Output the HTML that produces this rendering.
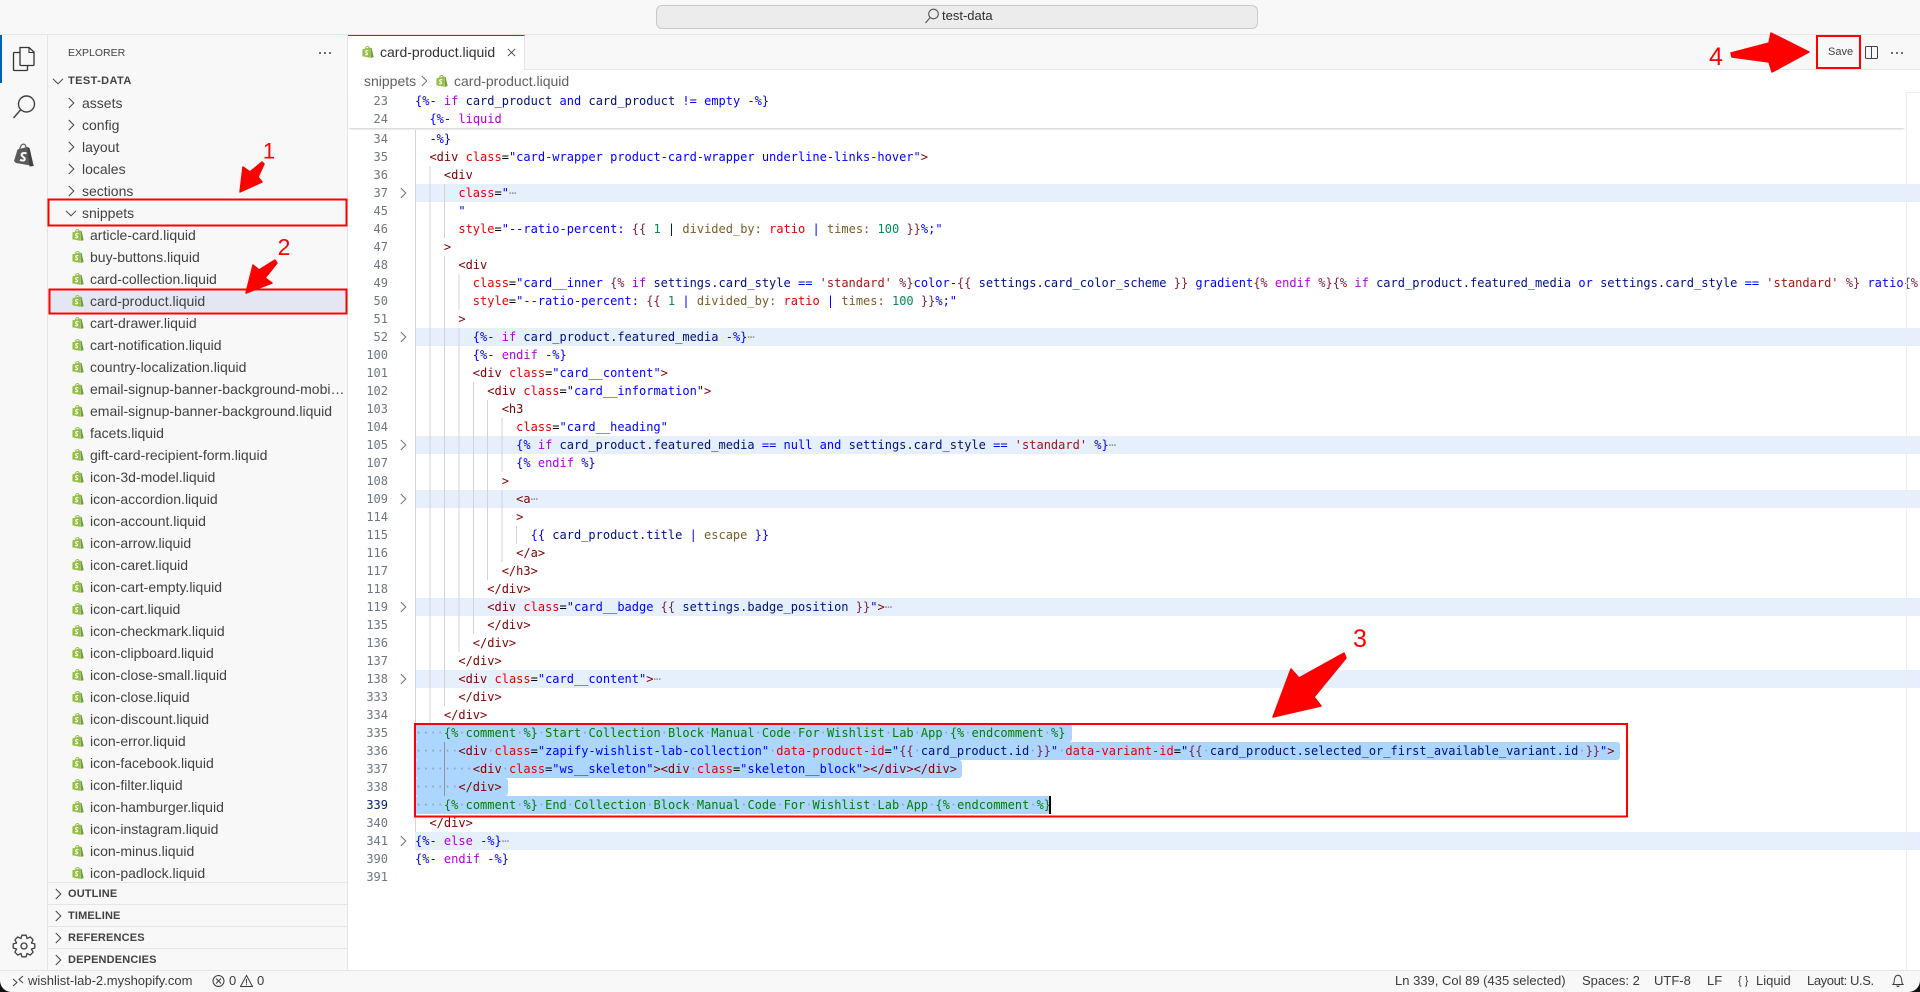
<!DOCTYPE html>
<html lang="en"><head><meta charset="utf-8"><title>card-product.liquid - test-data</title>
<style>
html,body{margin:0;padding:0;width:1920px;height:992px;overflow:hidden;background:#fff}
body{position:relative;font-family:"Liberation Sans",sans-serif;color:#424242;font-size:14px}
.abs,.abs2{position:absolute}
#title{left:0;top:0;width:1920px;height:34px;background:#f8f8f8;border-bottom:1px solid #e5e5e5}
#search{left:656px;top:5px;width:600px;height:22px;background:#ececec;border:1px solid #c9c9c9;border-radius:6px}
#stxt{left:942px;top:7px;font-size:13px;line-height:18px;color:#2e2e2e}
#act{left:0;top:35px;width:47px;height:935px;background:#f8f8f8;border-right:1px solid #e5e5e5}
#actline{left:0;top:35px;width:2px;height:48px;background:#005fb8}
#side{left:48px;top:35px;width:299px;height:935px;background:#f8f8f8;border-right:1px solid #e5e5e5;overflow:hidden}
#tabs{left:348px;top:35px;width:1572px;height:34px;background:#f8f8f8;border-bottom:1px solid #e5e5e5}
#tab{left:348px;top:35px;width:177px;height:35px;background:#fff;border-right:1px solid #e5e5e5;border-top:1px solid #005fb8;box-sizing:border-box}
#tabt{left:380px;top:42px;line-height:20px;color:#333}
.hd{position:absolute;left:68px;font-size:10.5px;line-height:14px;color:#424242}
.b{position:absolute;left:68px;font-size:11px;font-weight:bold;line-height:22px;color:#424242;letter-spacing:.15px}
.sep{position:absolute;left:48px;width:299px;height:1px;background:#e5e5e5}
.r{position:absolute;left:48px;width:299px;height:22px;line-height:22px;overflow:hidden;white-space:nowrap}
.r span{position:absolute;left:42px;width:256px;overflow:hidden;text-overflow:ellipsis;top:0;color:#424242}
.r.dr span{left:34px}
.r svg{position:absolute}
.r.fi svg{left:24px;top:5px}
.r.dr svg{left:15px;top:3px}
#sel{background:#e4e6f1}
#crumb{left:348px;top:70px;width:1572px;height:22px;background:#fff}
.cr{position:absolute;top:71px;line-height:21px;color:#616161}
#code{left:415px;top:130px;width:1505px;font:12px/18px "DejaVu Sans Mono",monospace;color:#000;z-index:0}
#sticky{left:348px;top:92px;width:1557px;height:36px;background:#fff;box-shadow:0 2px 2px -1px #ccc;z-index:2;font:12px/18px "DejaVu Sans Mono",monospace}
#sticky .l{left:67px}
.l{position:relative;height:18px;white-space:pre;width:1505px}
.l>b{position:absolute;left:-65px;width:38px;text-align:right;font-weight:normal;color:#6e7681;top:0}
.l>svg{position:absolute;left:-20px;top:1px;opacity:.75}
.h{background-color:#e5f0fc}
.g1{background-image:linear-gradient(#d3d3d3,#d3d3d3);background-size:1px 100%;background-repeat:no-repeat}
.gg{background-image:repeating-linear-gradient(90deg,#d3d3d3 0,#d3d3d3 1px,transparent 1px,transparent 14.44px);background-repeat:no-repeat;background-position:0 0;background-size:var(--w) 100%}
.t{color:#800000}.a{color:#e50000}.s{color:#0000ff}.k{color:#0000ff}.c{color:#af00db}.v{color:#001080}.n{color:#098658}.f{color:#795e26}.m{color:#811f3f}.q{color:#a31515}.o{color:#008000}
.e{color:#999;font-style:normal}
u{text-decoration:none;color:#8aa4bf}
.sl{position:absolute;left:0;top:0;height:18px;background:#add6ff;border-radius:3px;z-index:-1}
.ag{position:absolute;left:28.88px;top:0;width:1px;height:18px;background:#939393}
#mm{left:1906px;top:92px;width:13px;height:878px;border-left:1px solid #eee;border-top:1px solid #eee;z-index:3}
#status{left:0;top:970px;width:1920px;height:21px;background:#f8f8f8;border-top:1px solid #e5e5e5;z-index:4}
.st{position:absolute;top:971px;line-height:20px;font-size:13px;color:#3b3b3b;z-index:5;white-space:nowrap}
#ann{position:absolute;left:0;top:0;z-index:10}
.dots{position:absolute;width:2.4px;height:2.4px;border-radius:50%;background:#424242;box-shadow:5px 0 #424242,10px 0 #424242}
</style></head>
<body>
<svg width="0" height="0" style="position:absolute">
<symbol id="bag" viewBox="0.8 0.6 14.400 14.900"><path d="M1.200 4.600 10.400 2.400 11.200 15.400 1 13.400Z" fill="#95bf47"/><path d="M10.800 2.500 12.600 3.200 15 14.400 11.600 15.400Z" fill="#6f9e3c"/><path d="M4.800 4.200C5 2.200 6.400.9 7.600 1.100 8.700 1.300 9.200 2.200 9.300 3.200" fill="none" stroke="#95bf47" stroke-width="1.100"/><path d="M8.500 6.600C7 5.900 5 6.300 5.100 7.700 5.200 9 7.600 9.100 7.500 10.600 7.400 11.800 5.600 11.700 4.400 11" fill="none" stroke="#fff" stroke-width="1.400"/></symbol>
<symbol id="cr" viewBox="0 0 16 16"><path d="M5.800 3 10.800 8 5.800 13" fill="none" stroke="#424242" stroke-width="1"/></symbol>
<symbol id="cd" viewBox="0 0 16 16"><path d="M3 5.800 8 10.800 13 5.800" fill="none" stroke="#424242" stroke-width="1"/></symbol>
</svg>

<div class="abs" id="title"></div>
<div class="abs" id="search"></div>
<svg class="abs" style="left:923px;top:7px" width="17" height="18" viewBox="0 0 17 18"><circle cx="10.500" cy="7" r="4.800" fill="none" stroke="#555" stroke-width="1.100"/><path d="M7 10.600 2.500 16" stroke="#555" stroke-width="1.100"/></svg>
<div class="abs" id="stxt">test-data</div>

<div class="abs" id="act"></div><div class="abs" id="actline"></div>
<svg class="abs" style="left:0;top:35px" width="47" height="140" viewBox="0 0 47 140">
<path d="M19.500 17.500H14.500a1 1 0 0 0-1 1V34.500a1 1 0 0 0 1 1H26.500a1 1 0 0 0 1-1V30.500" fill="none" stroke="#333" stroke-width="1.300"/>
<path d="M20 12.500V29.500a1 1 0 0 0 1 1H33a1 1 0 0 0 1-1V17L29 12.500Z" fill="#f8f8f8" stroke="#333" stroke-width="1.300"/>
<path d="M29 12.500V17.500H34" fill="none" stroke="#333" stroke-width="1.100"/>
<circle cx="26.500" cy="69" r="8" fill="none" stroke="#424242" stroke-width="1.400"/><path d="M20.500 75 13.500 83" stroke="#424242" stroke-width="1.500" fill="none"/>
<path d="M14 126 17.500 114.500 27 112 29 112.500 33.500 131 16 128Z" fill="#5a5a5a"/><path d="M27.500 112.500 29.500 113 33.700 131 29.500 131.500Z" fill="#424242"/><path d="M19.500 115C20 111 22 108.800 24 109.200 25.400 109.600 26 111 26 113" fill="none" stroke="#5a5a5a" stroke-width="1.200"/>
<path d="M26.500 118.500C24.500 117.500 21.500 118 21.600 120 21.800 122 25 122 24.800 124.200 24.600 126 22 125.800 20 124.800" fill="none" stroke="#f8f8f8" stroke-width="2"/>
</svg>
<svg class="abs" style="left:12px;top:934px" width="24" height="24" viewBox="0 0 24 24"><g transform="translate(12 12)"><path d="M-2.100-10.800 2.100-10.800 3.060-7.390 6.150-9.120 9.120-6.150 7.390-3.060 10.800-2.100 10.800 2.100 7.390 3.060 9.120 6.150 6.150 9.120 3.060 7.390 2.100 10.800-2.100 10.800-3.060 7.390-6.150 9.120-9.120 6.150-7.390 3.060-10.800 2.100-10.800-2.100-7.390-3.060-9.120-6.150-6.150-9.120-3.060-7.390Z" fill="none" stroke="#424242" stroke-width="1.300" stroke-linejoin="round"/><circle r="3" fill="none" stroke="#424242" stroke-width="1.300"/></g></svg>

<div class="abs" id="side"></div>
<div class="hd" style="top:46px">EXPLORER</div>
<div class="dots" style="left:319px;top:52px"></div>
<svg class="abs" style="left:50px;top:73px" width="16" height="16"><use href="#cd"/></svg>
<div class="b" style="top:70px;letter-spacing:.4px">TEST-DATA</div>

<div class="r dr" style="top:92px"><svg width="16" height="16"><use href="#cr"/></svg><span>assets</span></div>
<div class="r dr" style="top:114px"><svg width="16" height="16"><use href="#cr"/></svg><span>config</span></div>
<div class="r dr" style="top:136px"><svg width="16" height="16"><use href="#cr"/></svg><span>layout</span></div>
<div class="r dr" style="top:158px"><svg width="16" height="16"><use href="#cr"/></svg><span>locales</span></div>
<div class="r dr" style="top:180px"><svg width="16" height="16"><use href="#cr"/></svg><span>sections</span></div>
<div class="r dr" style="top:202px"><svg width="16" height="16"><use href="#cd"/></svg><span>snippets</span></div>
<div class="r fi" style="top:224px"><svg width="12" height="12"><use href="#bag"/></svg><span>article-card.liquid</span></div>
<div class="r fi" style="top:246px"><svg width="12" height="12"><use href="#bag"/></svg><span>buy-buttons.liquid</span></div>
<div class="r fi" style="top:268px"><svg width="12" height="12"><use href="#bag"/></svg><span>card-collection.liquid</span></div>
<div class="r fi" id="sel" style="top:290px"><svg width="12" height="12"><use href="#bag"/></svg><span>card-product.liquid</span></div>
<div class="r fi" style="top:312px"><svg width="12" height="12"><use href="#bag"/></svg><span>cart-drawer.liquid</span></div>
<div class="r fi" style="top:334px"><svg width="12" height="12"><use href="#bag"/></svg><span>cart-notification.liquid</span></div>
<div class="r fi" style="top:356px"><svg width="12" height="12"><use href="#bag"/></svg><span>country-localization.liquid</span></div>
<div class="r fi" style="top:378px"><svg width="12" height="12"><use href="#bag"/></svg><span>email-signup-banner-background-mobile.liquid</span></div>
<div class="r fi" style="top:400px"><svg width="12" height="12"><use href="#bag"/></svg><span>email-signup-banner-background.liquid</span></div>
<div class="r fi" style="top:422px"><svg width="12" height="12"><use href="#bag"/></svg><span>facets.liquid</span></div>
<div class="r fi" style="top:444px"><svg width="12" height="12"><use href="#bag"/></svg><span>gift-card-recipient-form.liquid</span></div>
<div class="r fi" style="top:466px"><svg width="12" height="12"><use href="#bag"/></svg><span>icon-3d-model.liquid</span></div>
<div class="r fi" style="top:488px"><svg width="12" height="12"><use href="#bag"/></svg><span>icon-accordion.liquid</span></div>
<div class="r fi" style="top:510px"><svg width="12" height="12"><use href="#bag"/></svg><span>icon-account.liquid</span></div>
<div class="r fi" style="top:532px"><svg width="12" height="12"><use href="#bag"/></svg><span>icon-arrow.liquid</span></div>
<div class="r fi" style="top:554px"><svg width="12" height="12"><use href="#bag"/></svg><span>icon-caret.liquid</span></div>
<div class="r fi" style="top:576px"><svg width="12" height="12"><use href="#bag"/></svg><span>icon-cart-empty.liquid</span></div>
<div class="r fi" style="top:598px"><svg width="12" height="12"><use href="#bag"/></svg><span>icon-cart.liquid</span></div>
<div class="r fi" style="top:620px"><svg width="12" height="12"><use href="#bag"/></svg><span>icon-checkmark.liquid</span></div>
<div class="r fi" style="top:642px"><svg width="12" height="12"><use href="#bag"/></svg><span>icon-clipboard.liquid</span></div>
<div class="r fi" style="top:664px"><svg width="12" height="12"><use href="#bag"/></svg><span>icon-close-small.liquid</span></div>
<div class="r fi" style="top:686px"><svg width="12" height="12"><use href="#bag"/></svg><span>icon-close.liquid</span></div>
<div class="r fi" style="top:708px"><svg width="12" height="12"><use href="#bag"/></svg><span>icon-discount.liquid</span></div>
<div class="r fi" style="top:730px"><svg width="12" height="12"><use href="#bag"/></svg><span>icon-error.liquid</span></div>
<div class="r fi" style="top:752px"><svg width="12" height="12"><use href="#bag"/></svg><span>icon-facebook.liquid</span></div>
<div class="r fi" style="top:774px"><svg width="12" height="12"><use href="#bag"/></svg><span>icon-filter.liquid</span></div>
<div class="r fi" style="top:796px"><svg width="12" height="12"><use href="#bag"/></svg><span>icon-hamburger.liquid</span></div>
<div class="r fi" style="top:818px"><svg width="12" height="12"><use href="#bag"/></svg><span>icon-instagram.liquid</span></div>
<div class="r fi" style="top:840px"><svg width="12" height="12"><use href="#bag"/></svg><span>icon-minus.liquid</span></div>
<div class="r fi" style="top:862px"><svg width="12" height="12"><use href="#bag"/></svg><span>icon-padlock.liquid</span></div>

<div class="sep" style="top:882px"></div><div class="sep" style="top:904px"></div><div class="sep" style="top:926px"></div><div class="sep" style="top:948px"></div>
<svg class="abs" style="left:50px;top:886px" width="16" height="16"><use href="#cr"/></svg><div class="b" style="top:883px">OUTLINE</div>
<svg class="abs" style="left:50px;top:908px" width="16" height="16"><use href="#cr"/></svg><div class="b" style="top:905px">TIMELINE</div>
<svg class="abs" style="left:50px;top:930px" width="16" height="16"><use href="#cr"/></svg><div class="b" style="top:927px">REFERENCES</div>
<svg class="abs" style="left:50px;top:952px" width="16" height="16"><use href="#cr"/></svg><div class="b" style="top:949px">DEPENDENCIES</div>

<div class="abs" id="tabs"></div>
<div class="abs" id="tab"></div>
<svg class="abs" style="left:362px;top:46px" width="12" height="12"><use href="#bag"/></svg>
<div class="abs" id="tabt">card-product.liquid</div>
<svg class="abs" style="left:507px;top:48px" width="9" height="9" viewBox="0 0 10 10"><path d="M1 1 9 9M9 1 1 9" stroke="#424242" stroke-width="1"/></svg>
<div class="abs" style="left:1828px;top:45px;font-size:11px;line-height:14px;color:#424242">Save</div>
<svg class="abs" style="left:1865px;top:46px" width="13" height="14" viewBox="0 0 13 14"><rect x=".5" y=".5" width="12" height="12" rx="1" fill="none" stroke="#424242"/><path d="M6.500 .5V12.500" stroke="#424242"/></svg>
<div class="dots" style="left:1891px;top:52px"></div>

<div class="abs" id="crumb"></div>
<div class="cr" style="left:364px">snippets</div>
<svg class="abs" style="left:416px;top:73px;opacity:.75" width="16" height="16"><use href="#cr"/></svg>
<svg class="abs" style="left:436px;top:75px" width="12" height="12"><use href="#bag"/></svg>
<div class="cr" style="left:454px">card-product.liquid</div>

<div class="abs" id="sticky">
<div class="abs2" style="left:0;top:0;width:1px"></div>
<div class="l"><b>23</b><span class="k">{%-</span> <span class="c">if</span> <span class="v">card_product</span> <span class="k">and</span> <span class="v">card_product</span> <span class="k">!=</span> <span class="k">empty</span> <span class="k">-%}</span></div>
<div class="l"><b>24</b>  <span class="k">{%-</span> <span class="c">liquid</span></div>
</div>

<div class="abs" id="code">
<div class="l g1"><b>34</b>  <span class="k">-%}</span></div>
<div class="l g1"><b>35</b>  <span class="t">&lt;div</span> <span class="a">class</span>=<span class="s">"card-wrapper product-card-wrapper underline-links-hover"</span><span class="t">&gt;</span></div>
<div class="l gg" style="--w:28.88px"><b>36</b>    <span class="t">&lt;div</span></div>
<div class="l gg h" style="--w:43.32px"><b>37</b><svg width="16" height="16"><use href="#cr"/></svg>      <span class="a">class</span>=<span class="s">"</span><i class="e">⋯</i></div>
<div class="l gg" style="--w:43.32px"><b>45</b>      <span class="s">"</span></div>
<div class="l gg" style="--w:43.32px"><b>46</b>      <span class="a">style</span>=<span class="s">"--ratio-percent: </span><span class="m">{{</span> <span class="n">1</span> <span class="k">|</span> <span class="f">divided_by:</span> <span class="a">ratio</span> <span class="k">|</span> <span class="f">times:</span> <span class="n">100</span> <span class="m">}}</span><span class="s">%;"</span></div>
<div class="l gg" style="--w:28.88px"><b>47</b>    <span class="t">&gt;</span></div>
<div class="l gg" style="--w:43.32px"><b>48</b>      <span class="t">&lt;div</span></div>
<div class="l gg" style="--w:57.76px"><b>49</b>        <span class="a">class</span>=<span class="s">"card__inner </span><span class="m">{%</span> <span class="c">if</span> <span class="v">settings.card_style</span> <span class="k">==</span> <span class="q">'standard'</span> <span class="m">%}</span><span class="s">color-</span><span class="m">{{</span> <span class="v">settings.card_color_scheme</span> <span class="m">}}</span><span class="s"> gradient</span><span class="m">{%</span> <span class="c">endif</span> <span class="m">%}{%</span> <span class="c">if</span> <span class="v">card_product.featured_media</span> <span class="k">or</span> <span class="v">settings.card_style</span> <span class="k">==</span> <span class="q">'standard'</span> <span class="m">%}</span><span class="s"> ratio</span><span class="m">{%</span></div>
<div class="l gg" style="--w:57.76px"><b>50</b>        <span class="a">style</span>=<span class="s">"--ratio-percent: </span><span class="m">{{</span> <span class="n">1</span> <span class="k">|</span> <span class="f">divided_by:</span> <span class="a">ratio</span> <span class="k">|</span> <span class="f">times:</span> <span class="n">100</span> <span class="m">}}</span><span class="s">%;"</span></div>
<div class="l gg" style="--w:43.32px"><b>51</b>      <span class="t">&gt;</span></div>
<div class="l gg h" style="--w:57.76px"><b>52</b><svg width="16" height="16"><use href="#cr"/></svg>        <span class="k">{%-</span> <span class="c">if</span> <span class="v">card_product.featured_media</span> <span class="k">-%}</span><i class="e">⋯</i></div>
<div class="l gg" style="--w:57.76px"><b>100</b>        <span class="k">{%-</span> <span class="c">endif</span> <span class="k">-%}</span></div>
<div class="l gg" style="--w:57.76px"><b>101</b>        <span class="t">&lt;div</span> <span class="a">class</span>=<span class="s">"card__content"</span><span class="t">&gt;</span></div>
<div class="l gg" style="--w:72.2px"><b>102</b>          <span class="t">&lt;div</span> <span class="a">class</span>=<span class="s">"card__information"</span><span class="t">&gt;</span></div>
<div class="l gg" style="--w:86.64px"><b>103</b>            <span class="t">&lt;h3</span></div>
<div class="l gg" style="--w:101.08px"><b>104</b>              <span class="a">class</span>=<span class="s">"card__heading"</span></div>
<div class="l gg h" style="--w:101.08px"><b>105</b><svg width="16" height="16"><use href="#cr"/></svg>              <span class="k">{%</span> <span class="c">if</span> <span class="v">card_product.featured_media</span> <span class="k">==</span> <span class="k">null</span> <span class="k">and</span> <span class="v">settings.card_style</span> <span class="k">==</span> <span class="q">'standard'</span> <span class="k">%}</span><i class="e">⋯</i></div>
<div class="l gg" style="--w:101.08px"><b>107</b>              <span class="k">{%</span> <span class="c">endif</span> <span class="k">%}</span></div>
<div class="l gg" style="--w:86.64px"><b>108</b>            <span class="t">&gt;</span></div>
<div class="l gg h" style="--w:101.08px"><b>109</b><svg width="16" height="16"><use href="#cr"/></svg>              <span class="t">&lt;a</span><i class="e">⋯</i></div>
<div class="l gg" style="--w:101.08px"><b>114</b>              <span class="t">&gt;</span></div>
<div class="l gg" style="--w:115.52px"><b>115</b>                <span class="k">{{</span> <span class="v">card_product.title</span> <span class="k">|</span> <span class="f">escape</span> <span class="k">}}</span></div>
<div class="l gg" style="--w:101.08px"><b>116</b>              <span class="t">&lt;/a&gt;</span></div>
<div class="l gg" style="--w:86.64px"><b>117</b>            <span class="t">&lt;/h3&gt;</span></div>
<div class="l gg" style="--w:72.2px"><b>118</b>          <span class="t">&lt;/div&gt;</span></div>
<div class="l gg h" style="--w:72.2px"><b>119</b><svg width="16" height="16"><use href="#cr"/></svg>          <span class="t">&lt;div</span> <span class="a">class</span>=<span class="s">"card__badge </span><span class="m">{{</span> <span class="v">settings.badge_position</span> <span class="m">}}</span><span class="s">"</span><span class="t">&gt;</span><i class="e">⋯</i></div>
<div class="l gg" style="--w:72.2px"><b>135</b>          <span class="t">&lt;/div&gt;</span></div>
<div class="l gg" style="--w:57.76px"><b>136</b>        <span class="t">&lt;/div&gt;</span></div>
<div class="l gg" style="--w:43.32px"><b>137</b>      <span class="t">&lt;/div&gt;</span></div>
<div class="l gg h" style="--w:43.32px"><b>138</b><svg width="16" height="16"><use href="#cr"/></svg>      <span class="t">&lt;div</span> <span class="a">class</span>=<span class="s">"card__content"</span><span class="t">&gt;</span><i class="e">⋯</i></div>
<div class="l gg" style="--w:43.32px"><b>333</b>      <span class="t">&lt;/div&gt;</span></div>
<div class="l gg" style="--w:28.88px"><b>334</b>    <span class="t">&lt;/div&gt;</span></div>
<div class="l"><em class="sl" style="width:657px"></em><b>335</b><u>····</u><span class="o">{%<u>·</u>comment<u>·</u>%}<u>·</u>Start<u>·</u>Collection<u>·</u>Block<u>·</u>Manual<u>·</u>Code<u>·</u>For<u>·</u>Wishlist<u>·</u>Lab<u>·</u>App<u>·</u>{%<u>·</u>endcomment<u>·</u>%}</span></div>
<div class="l"><em class="sl" style="width:1205px"></em><em class="ag"></em><b>336</b><u>······</u><span class="t">&lt;div</span><u>·</u><span class="a">class</span>=<span class="s">"zapify-wishlist-lab-collection"</span><u>·</u><span class="a">data-product-id</span>=<span class="s">"</span><span class="m">{{</span><u>·</u><span class="v">card_product.id</span><u>·</u><span class="m">}}</span><span class="s">"</span><u>·</u><span class="a">data-variant-id</span>=<span class="s">"</span><span class="m">{{</span><u>·</u><span class="v">card_product.selected_or_first_available_variant.id</span><u>·</u><span class="m">}}</span><span class="s">"</span><span class="t">&gt;</span></div>
<div class="l"><em class="sl" style="width:547px"></em><em class="ag"></em><b>337</b><u>········</u><span class="t">&lt;div</span><u>·</u><span class="a">class</span>=<span class="s">"ws__skeleton"</span><span class="t">&gt;&lt;div</span><u>·</u><span class="a">class</span>=<span class="s">"skeleton__block"</span><span class="t">&gt;&lt;/div&gt;&lt;/div&gt;</span></div>
<div class="l"><em class="sl" style="width:93px"></em><em class="ag"></em><b>338</b><u>······</u><span class="t">&lt;/div&gt;</span></div>
<div class="l"><em class="sl" style="width:635px"></em><b style="color:#0b216f">339</b><u>····</u><span class="o">{%<u>·</u>comment<u>·</u>%}<u>·</u>End<u>·</u>Collection<u>·</u>Block<u>·</u>Manual<u>·</u>Code<u>·</u>For<u>·</u>Wishlist<u>·</u>Lab<u>·</u>App<u>·</u>{%<u>·</u>endcomment<u>·</u>%}</span><em style="position:absolute;left:634px;top:0;width:2px;height:18px;background:#000"></em></div>
<div class="l g1"><b>340</b>  <span class="t">&lt;/div&gt;</span></div>
<div class="l h"><b>341</b><svg width="16" height="16"><use href="#cr"/></svg><span class="k">{%-</span> <span class="c">else</span> <span class="k">-%}</span><i class="e">⋯</i></div>
<div class="l"><b>390</b><span class="k">{%-</span> <span class="c">endif</span> <span class="k">-%}</span></div>
<div class="l"><b>391</b></div>
</div>

<div class="abs" id="mm"></div>

<div class="abs" id="status"></div>
<svg class="abs" style="left:12px;top:973px;z-index:5" width="12" height="16" viewBox="0 0 12 16"><path d="M1 6 5 9.500 1 13M11 3 7 6.500 11 10" fill="none" stroke="#3b3b3b" stroke-width="1"/></svg>
<div class="st" style="left:28px">wishlist-lab-2.myshopify.com</div>
<svg class="abs" style="left:212px;top:974px;z-index:5" width="13" height="14" viewBox="0 0 13 14"><circle cx="6.500" cy="7" r="5.500" fill="none" stroke="#3b3b3b"/><path d="M4 4.500 9 9.500M9 4.500 4 9.500" stroke="#3b3b3b"/></svg>
<div class="st" style="left:229px">0</div>
<svg class="abs" style="left:240px;top:974px;z-index:5" width="13" height="14" viewBox="0 0 13 14"><path d="M6.500 1.500 12.500 12.500H.5Z" fill="none" stroke="#3b3b3b"/><path d="M6.500 5V9.500M6.500 10.300V11.300" stroke="#3b3b3b"/></svg>
<div class="st" style="left:257px">0</div>
<div class="st" style="left:1395px">Ln 339, Col 89 (435 selected)</div>
<div class="st" style="left:1582px">Spaces: 2</div>
<div class="st" style="left:1654px">UTF-8</div>
<div class="st" style="left:1707px">LF</div>
<div class="st" style="left:1738px;font-size:11px">{ }</div>
<div class="st" style="left:1756px">Liquid</div>
<div class="st" style="left:1807px;letter-spacing:-.4px">Layout: U.S.</div>
<svg class="abs" style="left:1892px;top:974px;z-index:5" width="12" height="14" viewBox="0 0 12 14"><path d="M1 10.500C2.500 9.500 2 7 2.500 5 3 2.500 4.500 1.200 6 1.200S9 2.500 9.500 5C10 7 9.500 9.500 11 10.500ZM4.800 11.500C5 12.800 7 12.800 7.200 11.500" fill="none" stroke="#3b3b3b"/></svg>
<svg class="abs" style="left:0;top:980px;z-index:6" width="12" height="12"><path d="M0 0C0 7 5 12 12 12H0Z" fill="#111"/></svg>
<svg class="abs" style="left:1908px;top:980px;z-index:6" width="12" height="12"><path d="M12 0C12 7 7 12 0 12H12Z" fill="#111"/></svg>

<svg id="ann" width="1920" height="992" viewBox="0 0 1920 992">
<g fill="none" stroke="#f00" stroke-width="2">
<rect x="48.500" y="199.500" width="298" height="26"/>
<rect x="49.500" y="289.500" width="297" height="24"/>
<rect x="415" y="724" width="1212" height="92.500"/>
<rect x="1817" y="36" width="43" height="32"/>
</g>
<g fill="#f00" stroke="#f00" stroke-width="1.500" stroke-linejoin="round">
<path d="M240 192 243 167 250 172 262 162 264 164 258 177 262 182Z"/>
<path d="M246 293 253 265 259 270 275 260 277 263 265 278 272 283Z"/>
<path d="M1273 717 1291 669 1299 678 1344 653 1346 658 1314 697 1321 706Z"/>
<path d="M1809 52 1771 33 1769 43 1731 53 1732 57 1769 62 1772 72Z"/>
</g>
<g fill="#f00" font-family="Liberation Sans, sans-serif" text-anchor="middle">
<text x="269" y="158.500" font-size="22">1</text>
<text x="284" y="255" font-size="23">2</text>
<text x="1360" y="647" font-size="25">3</text>
<text x="1716" y="65" font-size="25">4</text>
</g>
</svg>
</body></html>
